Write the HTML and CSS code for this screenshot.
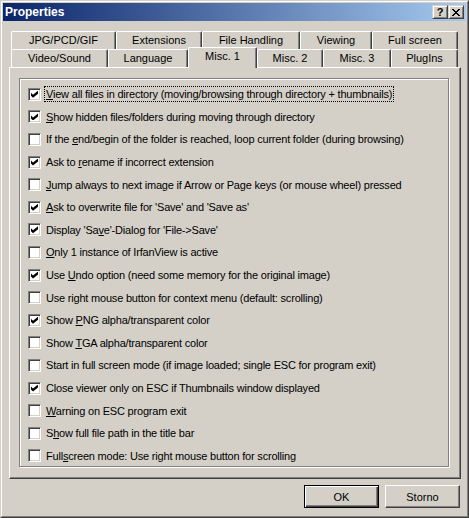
FILE: index.html
```html
<!DOCTYPE html>
<html>
<head>
<meta charset="utf-8">
<title>Properties</title>
<link rel="stylesheet" href="styles.css">
</head>
<body>
<div class="window">
  <div class="frame">
    <div class="titlebar">
      <span class="title">Properties</span>
      <div class="capbtns">
        <div class="capbtn help">?</div>
        <div class="capbtn close">
          <svg width="8" height="7" viewBox="0 0 8 7" shape-rendering="crispEdges">
            <rect x="0" y="0" width="2" height="1"/><rect x="6" y="0" width="2" height="1"/>
            <rect x="1" y="1" width="2" height="1"/><rect x="5" y="1" width="2" height="1"/>
            <rect x="2" y="2" width="4" height="1"/>
            <rect x="3" y="3" width="2" height="1"/>
            <rect x="2" y="4" width="4" height="1"/>
            <rect x="1" y="5" width="2" height="1"/><rect x="5" y="5" width="2" height="1"/>
            <rect x="0" y="6" width="2" height="1"/><rect x="6" y="6" width="2" height="1"/>
          </svg>
        </div>
      </div>
    </div>

    <div class="tabs">
      <div class="tabrow back">
        <div class="tab">JPG/PCD/GIF</div>
        <div class="tab">Extensions</div>
        <div class="tab">File Handling</div>
        <div class="tab">Viewing</div>
        <div class="tab">Full screen</div>
      </div>
      <div class="tabrow front">
        <div class="tab">Video/Sound</div>
        <div class="tab">Language</div>
        <div class="tab selected">Misc. 1</div>
        <div class="tab">Misc. 2</div>
        <div class="tab">Misc. 3</div>
        <div class="tab">PlugIns</div>
      </div>
      <div class="panel">
        <div class="group">
          <div class="row"><span class="cb on"></span><span class="lbl focus"><u>V</u>iew all files in directory (moving/browsing through directory + thumbnails)</span></div>
          <div class="row"><span class="cb on"></span><span class="lbl"><u>S</u>how hidden files/folders during moving through directory</span></div>
          <div class="row"><span class="cb"></span><span class="lbl">If the <u>e</u>nd/begin of the folder is reached, loop current folder (during browsing)</span></div>
          <div class="row"><span class="cb on"></span><span class="lbl">Ask to <u>r</u>ename if incorrect extension</span></div>
          <div class="row"><span class="cb"></span><span class="lbl"><u>J</u>ump always to next image if Arrow or Page keys (or mouse wheel) pressed</span></div>
          <div class="row"><span class="cb on"></span><span class="lbl"><u>A</u>sk to overwrite file for 'Save' and 'Save as'</span></div>
          <div class="row"><span class="cb on"></span><span class="lbl">Display 'Sa<u>v</u>e'-Dialog for 'File-&gt;Save'</span></div>
          <div class="row"><span class="cb"></span><span class="lbl"><u>O</u>nly 1 instance of IrfanView is active</span></div>
          <div class="row"><span class="cb on"></span><span class="lbl">Use <u>U</u>ndo option (need some memory for the original image)</span></div>
          <div class="row"><span class="cb"></span><span class="lbl">Use right mouse button for context menu (default: scrolling)</span></div>
          <div class="row"><span class="cb on"></span><span class="lbl">Show <u>P</u>NG alpha/transparent color</span></div>
          <div class="row"><span class="cb"></span><span class="lbl">Show <u>T</u>GA alpha/transparent color</span></div>
          <div class="row"><span class="cb"></span><span class="lbl">Start in full screen mode (if image loaded; single ESC for program exit)</span></div>
          <div class="row"><span class="cb on"></span><span class="lbl">Close viewer only on ESC if Thumbnails window displayed</span></div>
          <div class="row"><span class="cb"></span><span class="lbl"><u>W</u>arning on ESC program exit</span></div>
          <div class="row"><span class="cb"></span><span class="lbl">S<u>h</u>ow full file path in the title bar</span></div>
          <div class="row"><span class="cb"></span><span class="lbl">Full<u>s</u>creen mode: Use right mouse button for scrolling</span></div>
        </div>
      </div>
    </div>

    <div class="buttons">
      <div class="btn default">OK</div>
      <div class="btn">Storno</div>
    </div>
  </div>
</div>
</body>
</html>
```

FILE: styles.css
```css
* { box-sizing: border-box; }
html, body { margin: 0; padding: 0; background: #D4D0C8; }
body {
  font-family: "Liberation Sans", Arial, sans-serif;
  font-size: 11px;
  color: #000;
}
.window {
  width: 469px;
  height: 518px;
  background: #D4D0C8;
  border: 1px solid;
  border-color: #D4D0C8 #404040 #404040 #D4D0C8;
}
.frame {
  height: 100%;
  border: 1px solid;
  border-color: #fff #808080 #808080 #fff;
  padding: 1px;
}
.titlebar {
  height: 18px;
  display: flex;
  align-items: center;
  justify-content: space-between;
  padding: 0 2px 0 2px;
  background: linear-gradient(to right, #0A246A, #A6CAF0);
}
.title {
  color: #fff;
  font-weight: bold;
  font-size: 12px;
}
.capbtns { display: flex; }
.capbtn {
  width: 16px;
  height: 14px;
  background: #D4D0C8;
  border: 1px solid;
  border-color: #D4D0C8 #404040 #404040 #D4D0C8;
  box-shadow: inset 1px 1px 0 #fff, inset -1px -1px 0 #808080;
  display: flex;
  align-items: center;
  justify-content: center;
}
.capbtn.help {
  font-weight: bold;
  font-size: 11px;
  line-height: 12px;
}
.capbtn.close svg { fill: #000; display: block; }

.tabs {
  margin: 10px 0 0 6px;
  width: 452px;
}
.tabrow {
  display: grid;
  height: 18px;
  padding-left: 2px;
}
.tabrow.back { grid-template-columns: 105px 86px 98px 72px 86px; }
.tabrow.front { grid-template-columns: 97px 80px 69px 66px 68px 67px; }
.tab {
  height: 18px;
  border-top: 1px solid #fff;
  border-left: 1px solid #fff;
  border-right: 1px solid #404040;
  box-shadow: inset -1px 0 0 #808080;
  border-radius: 2px 2px 0 0;
  background: #D4D0C8;
  text-align: center;
  line-height: 16px;
  white-space: nowrap;
}
.tab.selected {
  height: 21px;
  margin-top: -2px;
  position: relative;
  z-index: 1;
}
.panel {
  height: 412px;
  border: 1px solid;
  border-color: #fff #404040 #404040 #fff;
  box-shadow: inset -1px -1px 0 #808080;
  padding: 10px 11px 11px 9px;
}
.group {
  height: 389px;
  border: 1px solid #808080;
  box-shadow: inset 1px 1px 0 #fff, 1px 1px 0 #fff;
  padding: 4px 0 0 8px;
  display: grid;
  grid-auto-rows: 22.6px;
  align-items: center;
}
.row {
  display: flex;
  align-items: center;
  white-space: nowrap;
}
.cb {
  width: 13px;
  height: 13px;
  flex: none;
  background: #fff;
  border: 1px solid;
  border-color: #808080 #fff #fff #808080;
  box-shadow: inset 1px 1px 0 #404040, inset -1px -1px 0 #D4D0C8;
  position: relative;
}
.cb.on::after {
  content: "";
  position: absolute;
  left: 2px;
  top: 2px;
  width: 7px;
  height: 7px;
  background: #000;
  clip-path: polygon(0 28.6%, 28.6% 57.1%, 100% 0, 100% 42.9%, 28.6% 100%, 0 71.4%);
}
.lbl {
  margin-left: 3px;
  padding: 0 1px;
  line-height: 14px;
  letter-spacing: -0.2px;
  border: 1px solid transparent;
}
.lbl.focus { border: 1px dotted #000; }

.buttons {
  display: flex;
  justify-content: flex-end;
  gap: 6px;
  margin-top: 6px;
  padding-right: 6px;
}
.btn {
  width: 75px;
  height: 23px;
  background: #D4D0C8;
  border: 1px solid;
  border-color: #fff #404040 #404040 #fff;
  box-shadow: inset -1px -1px 0 #808080;
  display: flex;
  align-items: center;
  justify-content: center;
}
.btn.default {
  border: 1px solid #000;
  box-shadow: inset 1px 1px 0 #fff, inset -1px -1px 0 #404040, inset -2px -2px 0 #808080;
}
```
